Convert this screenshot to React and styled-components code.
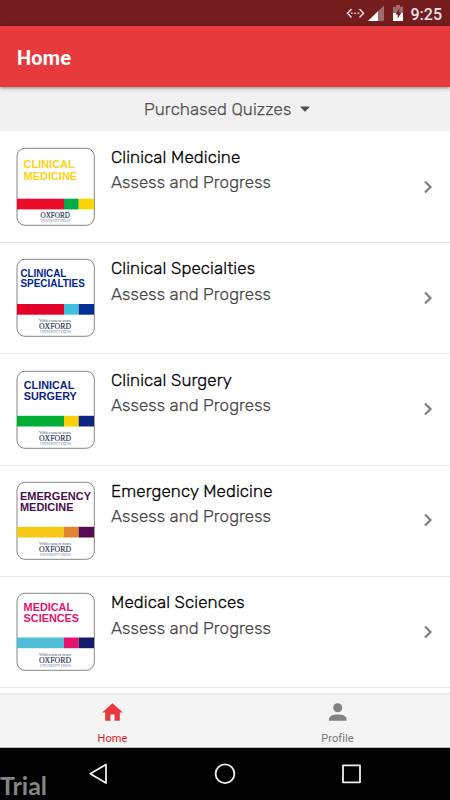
import React from "react";
import styled, { createGlobalStyle } from "styled-components";

const GlobalStyle = createGlobalStyle`
  * { box-sizing: border-box; }
  body { margin: 0; background: #fff; font-family: Roboto, sans-serif; }
`;

const Screen = styled.div`
  position: relative;
  width: 450px;
  height: 800px;
  display: flex;
  flex-direction: column;
  overflow: hidden;
  background: #fff;
`;

const StatusBar = styled.div`
  height: 26px;
  flex: none;
  display: flex;
  background: #731d1f;
`;

const StatusIcons = styled.svg`
  width: 64px;
  height: 26px;
  margin-left: 344px;
`;

const Clock = styled.span`
  margin-left: 2.5px;
  font: 500 16px/29px Roboto, sans-serif;
  letter-spacing: 0;
  color: #f0e8e8;
`;

const AppBar = styled.header`
  position: relative;
  height: 61px;
  flex: none;
  display: flex;
  align-items: center;
  padding: 2px 17px 0;
  background: #e73a3c;
  box-shadow: 0 1px 4px rgba(0, 0, 0, 0.45);
`;

const Title = styled.h1`
  margin: 0;
  font: 700 20px/24px Roboto, sans-serif;
  letter-spacing: 0.15px;
  color: #fff;
`;

const Filter = styled.div`
  height: 44px;
  flex: none;
  display: flex;
  align-items: center;
  gap: 8.5px;
  padding: 0 0 0 144px;
  background: #f1f1f1;
  color: #505050;
  font: 300 17px/22px Rubik, Roboto, sans-serif;
  letter-spacing: 0.1px;
  -webkit-text-stroke: 0.25px currentColor;
`;

const List = styled.main`
  height: 562px;
  flex: none;
  overflow: hidden;
  padding-top: 0.7px;
`;

const Row = styled.section`
  height: 111.3px;
  display: flex;
  border-bottom: 1px solid #e8e8e8;
  padding: 15.3px 16px 0;
`;

const Cover = styled.svg`
  width: 80px;
  height: 80px;
  flex: none;
`;

const Texts = styled.div`
  flex: 1;
  padding: 0 0 0 15px;
  font: 300 17px/25.4px Rubik, Roboto, sans-serif;
`;

const Name = styled.div`
  margin-top: -2px;
  color: #000;
  letter-spacing: 0.12px;
  -webkit-text-stroke: 0.28px currentColor;
`;

const Sub = styled.div`
  color: #484848;
  letter-spacing: 0.05px;
  -webkit-text-stroke: 0.25px currentColor;
`;

const Chevron = styled.svg`
  width: 10px;
  height: 14px;
  margin: 32.6px 1px 0 0;
  flex: none;
`;

const Tabs = styled.nav`
  height: 55px;
  flex: none;
  display: grid;
  grid-template-columns: 1fr 1fr;
  background: #f4f4f4;
  border-top: 2px solid #ebebeb;
  border-bottom: 1px solid #bdbdbd;
`;

const Tab = styled.div`
  display: flex;
  flex-direction: column;
  align-items: center;
  padding-top: 5px;
  color: ${(p) => (p.$active ? "#e5191d" : "#777")};
  font: 400 11px/16px Roboto, sans-serif;
  letter-spacing: 0.1px;
`;

const TabIcon = styled.svg`
  width: 25px;
  height: 25px;
  margin-bottom: 6px;
`;

const SystemNav = styled.footer`
  height: 52px;
  flex: none;
  background: #000;
`;

const NavIcons = styled.svg`
  display: block;
  width: 450px;
  height: 52px;
`;

const Watermark = styled.div`
  position: absolute;
  left: 0;
  bottom: 0;
  font: 700 25px/30px Lato, sans-serif;
  color: #858585;
`;

const quizzes = [
  { name: "Clinical Medicine", lines: [["CLINICAL", 51], ["MEDICINE", 53.5]], x: 7.6, y: [20.9, 32.5], size: 11, ink: "#fcd116", bars: ["#e90d2b", "#00ab4a", "#fdd400"], barY: 51.7, own: true },
  { name: "Clinical Specialties", lines: [["CLINICAL", 46], ["SPECIALTIES", 64.5]], x: 4.4, y: [19, 29], size: 10.2, ink: "#00259a", bars: ["#e4002b", "#3fc1dc", "#002f93"], barY: 46 },
  { name: "Clinical Surgery", lines: [["CLINICAL", 50.5], ["SURGERY", 53]], x: 7.8, y: [18.5, 29.5], size: 11, ink: "#0b1f85", bars: ["#00ad35", "#fccf05", "#0c2480"], barY: 45.8 },
  { name: "Emergency Medicine", lines: [["EMERGENCY", 71], ["MEDICINE", 53.5]], x: 4, y: [18.7, 30], size: 11, ink: "#4a0f4d", bars: ["#f5c815", "#e38430", "#560c50"], barY: 45.8 },
  { name: "Medical Sciences", lines: [["MEDICAL", 49.5], ["SCIENCES", 55.5]], x: 7.6, y: [18.6, 29.6], size: 11, ink: "#e5136d", bars: ["#50bed8", "#e6126d", "#111d6b"], barY: 45.5 },
];

function QuizCover({ quiz }) {
  const [a, b, c] = quiz.bars;
  return (
    <Cover viewBox="0 0 80 80">
      <rect x="1" y="1.3" width="77.3" height="77" rx="8" fill="#fff" stroke="#858585" strokeWidth="1" />
      {quiz.lines.map(([word, width], i) => (
        <text key={word} x={quiz.x} y={quiz.y[i]} textLength={width} lengthAdjust="spacingAndGlyphs" fill={quiz.ink} fontFamily="Liberation Sans" fontWeight="700" fontSize={quiz.size}>{word}</text>
      ))}
      <rect x="1" y={quiz.barY} width="47" height="10.7" fill={a} />
      <rect x="48" y={quiz.barY} width="14.7" height="10.7" fill={b} />
      <rect x="62.7" y={quiz.barY} width="15.3" height="10.7" fill={c} />
      {!quiz.own && (
        <text x="23" y="64.4" textLength="32" fill="#666b80" fontFamily="Liberation Serif" fontSize="5">With content from</text>
      )}
      <text x={quiz.own ? 24.5 : 23} y="71.2" textLength={quiz.own ? 29.5 : 32} lengthAdjust="spacingAndGlyphs" fill="#303a60" fontFamily="Liberation Serif" fontSize="7.8" stroke="#303a60" strokeWidth="0.2">OXFORD</text>
      <text x={quiz.own ? 24.5 : 24} y={quiz.own ? 75 : 75.4} textLength={quiz.own ? 29.5 : 31} lengthAdjust="spacingAndGlyphs" fill="#777d92" fontFamily="Liberation Serif" fontSize="3.4">UNIVERSITY PRESS</text>
    </Cover>
  );
}

export default function App() {
  return (
    <Screen>
      <GlobalStyle />
      <StatusBar>
        <StatusIcons viewBox="344 0 64 26">
          <g fill="none" stroke="#e6dada" strokeWidth="1.5">
            <path d="M351.5 9 347.5 13.2 351.5 17.4M359.5 9 363.5 13.2 359.5 17.4" />
            <path d="M351 13.2H360" strokeDasharray="1.6 1.7" />
          </g>
          <path d="M384 5.5V21H368Z" fill="#a36a6c" />
          <path d="M378 11.3V21H368Z" fill="#fff" />
          <path d="M396 5h4v1.7h3V13H393V6.7h3Z" fill="#a36a6c" />
          <path d="M393 13h10v8H393Z" fill="#fff" />
          <path d="M399.3 8.6 395.5 14.6H397.7V18.6L401.3 12.7H399.3Z" fill="#731d1f" />
        </StatusIcons>
        <Clock>9:25</Clock>
      </StatusBar>
      <AppBar><Title>Home</Title></AppBar>
      <Filter>
        <span>Purchased Quizzes</span>
        <svg width="10" height="6" viewBox="0 0 10 6"><path d="M.8.4H9.2Q9.8.6 9.3 1.3L5.6 5.3Q5 5.9 4.4 5.3L.7 1.3Q.2.6.8.4Z" fill="#505050" /></svg>
      </Filter>
      <List>
        {quizzes.map((quiz) => (
          <Row key={quiz.name}>
            <QuizCover quiz={quiz} />
            <Texts>
              <Name>{quiz.name}</Name>
              <Sub>Assess and Progress</Sub>
            </Texts>
            <Chevron viewBox="0 0 10 14"><path d="M2 1.5 7.5 7 2 12.5" fill="none" stroke="#808080" strokeWidth="2.2" /></Chevron>
          </Row>
        ))}
      </List>
      <Tabs>
        <Tab $active>
          <TabIcon viewBox="0 0 24 24"><path d="M10 20v-6h4v6h5v-8h3L12 3 2 12h3v8z" fill="#e73a3c" /></TabIcon>
          Home
        </Tab>
        <Tab>
          <TabIcon viewBox="0 0 25 25"><circle cx="12.7" cy="7.8" r="4.5" fill="#828282" /><path d="M4 20.8V18.8C4 12.9 21.5 12.9 21.5 18.8V20.8Z" fill="#828282" /></TabIcon>
          Profile
        </Tab>
      </Tabs>
      <SystemNav>
        <NavIcons viewBox="0 748 450 52">
          <g fill="none" stroke="#eee" strokeWidth="1.8" strokeLinejoin="round">
            <path d="M106 764.5V783L90.3 773.8Z" />
            <circle cx="225" cy="773.8" r="9.4" />
            <rect x="343" y="765.3" width="17" height="17" />
          </g>
        </NavIcons>
      </SystemNav>
      <Watermark>Trial</Watermark>
    </Screen>
  );
}
